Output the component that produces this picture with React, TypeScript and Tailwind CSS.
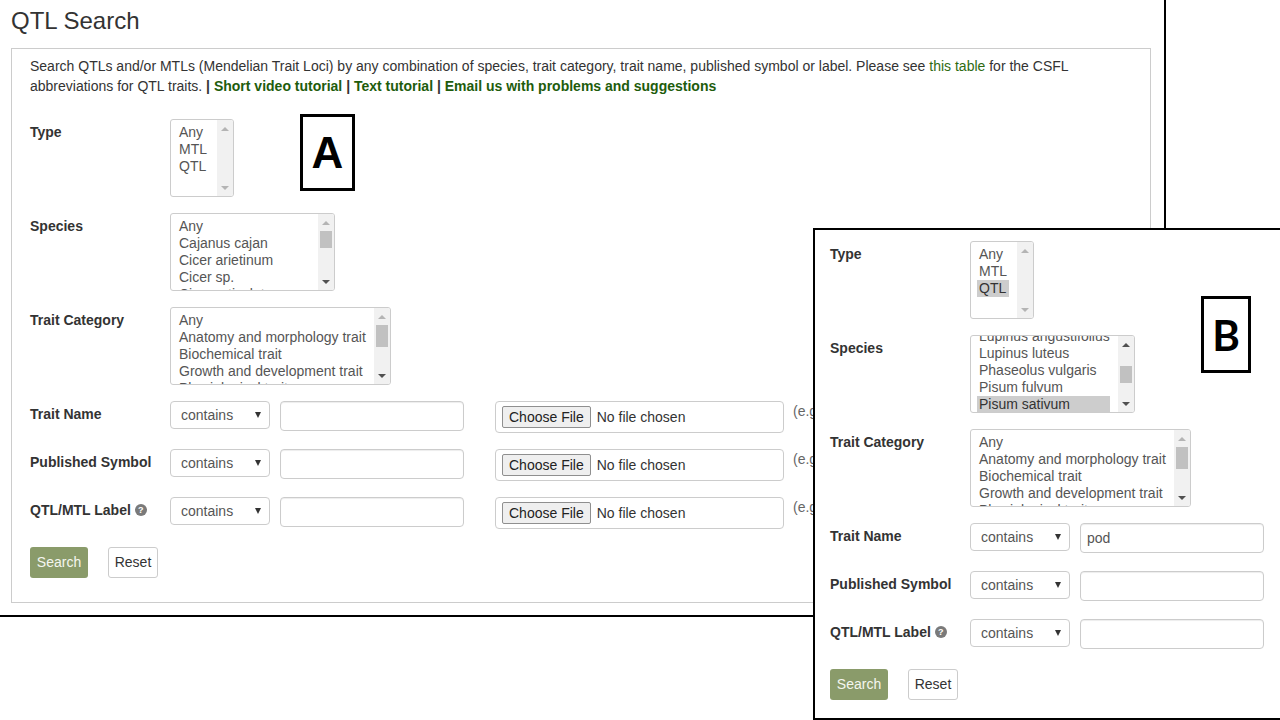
import React from 'react';

// Figure: panel A (full QTL search page) with panel B (filled-in form) laid over its lower right.

const GREEN = 'text-[#2f6b12]';
const GREEN_BOLD = 'text-[#1e5c0c]';

type Thumb = { mt: string; h: string } | null;

const ScrollArrow: React.FC<{ up?: boolean; dark?: boolean }> = ({ up, dark }) => (
  <div className="h-[17px] flex items-center justify-center">
    {up ? (
      <span
        className={`w-0 h-0 border-x-[4px] border-x-transparent border-b-[4px] ${
          dark ? 'border-b-[#505050]' : 'border-b-[#b4b4b4]'
        }`}
      />
    ) : (
      <span
        className={`w-0 h-0 border-x-[4px] border-x-transparent border-t-[4px] ${
          dark ? 'border-t-[#505050]' : 'border-t-[#b4b4b4]'
        }`}
      />
    )}
  </div>
);

const Listbox: React.FC<{
  width: string;
  options: string[];
  selected?: string;
  offset?: string;
  thumb: Thumb;
  upDark?: boolean;
  downDark?: boolean;
}> = ({ width, options, selected, offset = '', thumb, upDark, downDark }) => (
  <div className={`shrink-0 flex h-[78px] border border-[#ccc] rounded-[3px] bg-white overflow-hidden ${width}`}>
    <div className="flex-1 min-w-0 overflow-hidden pl-[6px] pr-[8px] pt-[4px] text-[#555]">
      <div className={offset}>
        {options.map((o) => (
          <div
            key={o}
            className={`px-[2px] h-[17px] leading-[17px] whitespace-nowrap ${
              o === selected ? 'bg-[#cdcdcd] text-[#333]' : ''
            }`}
          >
            {o}
          </div>
        ))}
      </div>
    </div>
    <div className="w-[16px] bg-[#f1f1f1] flex flex-col">
      <ScrollArrow up dark={upDark} />
      <div className="flex-1">
        {thumb && <div className={`mx-[2px] bg-[#c1c1c1] ${thumb.mt} ${thumb.h}`} />}
      </div>
      <ScrollArrow dark={downDark} />
    </div>
  </div>
);

const Contains: React.FC = () => (
  <div className="shrink-0 flex items-center justify-between w-[100px] h-[28px] border border-[#ccc] rounded-[4px] bg-white pl-[10px] pr-[8px] text-[#555] leading-[20px]">
    <span>contains</span>
    <span className="w-0 h-0 border-x-[3px] border-x-transparent border-t-[6px] border-t-[#333]" />
  </div>
);

const TextRow: React.FC<{ label: React.ReactNode; value?: string; files?: boolean }> = ({ label, value, files }) => (
  <div className="flex items-start h-[32px] whitespace-nowrap">
    <div className="shrink-0 w-[140px] pt-[3px] leading-[20px] font-bold flex items-center">{label}</div>
    <Contains />
    <div className="shrink-0 ml-[10px] w-[184px] h-[30px] border border-[#ccc] rounded-[4px] bg-white pl-[6px] flex items-center text-[#555] shadow-[inset_0_1px_1px_rgba(0,0,0,0.075)]">
      {value}
    </div>
    {files && (
      <>
        <div className="shrink-0 ml-[31px] w-[289px] h-[32px] border border-[#ccc] rounded-[4px] bg-white pl-[6px] flex items-center gap-[6px]">
          <span className="px-[6px] h-[22px] leading-[20px] border border-[#8f8f8f] rounded-[2px] bg-[#efefef] text-[#222]">
            Choose File
          </span>
          <span className="text-[#333]">No file chosen</span>
        </div>
        <div className="shrink-0 ml-[9px] leading-[20px] text-[#666]">(e.g.</div>
      </>
    )}
  </div>
);

const HelpIcon: React.FC = () => (
  <span className="ml-[4px] inline-flex items-center justify-center w-[12px] h-[12px] rounded-full bg-[#7a7a7a] text-white text-[9px] leading-none font-bold">
    ?
  </span>
);

const SearchForm: React.FC<{ filled?: boolean }> = ({ filled }) => (
  <div className="flex flex-col gap-[16px]">
    <div className="flex items-start">
      <div className="shrink-0 w-[140px] pt-[3px] leading-[20px] font-bold">Type</div>
      <Listbox
        width="w-[64px]"
        options={['Any', 'MTL', 'QTL']}
        selected={filled ? 'QTL' : undefined}
        thumb={null}
      />
    </div>
    <div className="flex items-start">
      <div className="shrink-0 w-[140px] pt-[3px] leading-[20px] font-bold">Species</div>
      {filled ? (
        <Listbox
          width="w-[165px]"
          options={['Lupinus angustifolius', 'Lupinus luteus', 'Phaseolus vulgaris', 'Pisum fulvum', 'Pisum sativum', 'Pisum sp.']}
          selected="Pisum sativum"
          offset="mt-[-12px]"
          thumb={{ mt: 'mt-[13px]', h: 'h-[17px]' }}
          upDark
          downDark
        />
      ) : (
        <Listbox
          width="w-[165px]"
          options={['Any', 'Cajanus cajan', 'Cicer arietinum', 'Cicer sp.', 'Cicer reticulatum']}
          thumb={{ mt: 'mt-0', h: 'h-[17px]' }}
          downDark
        />
      )}
    </div>
    <div className="flex items-start">
      <div className="shrink-0 w-[140px] pt-[3px] leading-[20px] font-bold">Trait Category</div>
      <Listbox
        width="w-[221px]"
        options={['Any', 'Anatomy and morphology trait', 'Biochemical trait', 'Growth and development trait', 'Physiological trait']}
        thumb={{ mt: 'mt-0', h: 'h-[22px]' }}
        downDark
      />
    </div>
    <TextRow label="Trait Name" value={filled ? 'pod' : undefined} files={!filled} />
    <TextRow label="Published Symbol" files={!filled} />
    <TextRow
      files={!filled}
      label={
        <>
          QTL/MTL Label
          <HelpIcon />
        </>
      }
    />
    <div className="flex items-center gap-[20px] mt-[2px]">
      <button className="w-[58px] h-[31px] rounded-[3px] bg-[#8a9b6a] text-[#f4f6ef]">Search</button>
      <button className="w-[50px] h-[31px] rounded-[3px] border border-[#ccc] bg-white text-[#333]">Reset</button>
    </div>
  </div>
);

const PanelLetter: React.FC<{ letter: string; className: string; font: string }> = ({ letter, className, font }) => (
  <div className={`absolute border-[3px] border-black bg-white flex items-center justify-center text-black ${className}`}>
    <span className={font}>{letter}</span>
  </div>
);

export default function App() {
  return (
    <div className="relative w-[1280px] h-[720px] overflow-hidden bg-white text-[14px] text-[#333] font-['Liberation_Sans',Arial,sans-serif]">
      {/* Panel A */}
      <div className="w-[1166px] h-[617px] border-r-2 border-b-2 border-black pl-[11px] pt-[8px]">
        <h1 className="text-[24px] leading-[26px] text-[#333]">QTL Search</h1>
        <div className="mt-[14px] w-[1140px] h-[555px] border border-[#ccc] pl-[18px] pt-[7px]">
          <p className="leading-[20px]">
            Search QTLs and/or MTLs (Mendelian Trait Loci) by any combination of species, trait category, trait name,
            published symbol or label. Please see <span className={GREEN}>this table</span> for the CSFL
            <br />
            abbreviations for QTL traits.{' '}
            <b>
              | <span className={GREEN_BOLD}>Short video tutorial</span> |{' '}
              <span className={GREEN_BOLD}>Text tutorial</span> |{' '}
              <span className={GREEN_BOLD}>Email us with problems and suggestions</span>
            </b>
          </p>
          <div className="mt-[23px]">
            <SearchForm />
          </div>
        </div>
      </div>
      <PanelLetter
        letter="A"
        className="left-[300px] top-[114px] w-[55px] h-[77px]"
        font="text-[44px] leading-none font-bold font-['Liberation_Sans',Arial,sans-serif]"
      />

      {/* Panel B */}
      <div className="absolute left-[813px] top-[228px] w-[470px] h-[492px] border-2 border-black bg-white pl-[15px] pt-[11px] overflow-hidden">
        <SearchForm filled />
        <PanelLetter
          letter="B"
          className="left-[386px] top-[66px] w-[50px] h-[77px]"
          font="text-[42px] leading-none font-bold font-['Lato',sans-serif]"
        />
      </div>
    </div>
  );
}
